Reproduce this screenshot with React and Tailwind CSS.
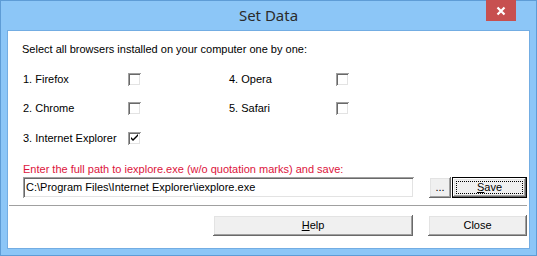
import React from "react";

const raised =
  "shadow-[inset_-1px_-1px_#696969,inset_1px_1px_#ffffff,inset_-2px_-2px_#a0a0a0,inset_2px_2px_#e3e3e3]";
const sunken =
  "shadow-[inset_1px_1px_#a0a0a0,inset_-1px_-1px_#ffffff,inset_2px_2px_#696969,inset_-2px_-2px_#e3e3e3]";

function Check({ checked }) {
  return (
    <div className={`w-[13px] h-[13px] bg-white ${sunken} relative`}>
      {checked && (
        <svg className="absolute left-0 top-0" width="13" height="13" viewBox="0 0 13 13">
          <path d="M3 5 L3 7 L5 9 L10 4 L10 2 L5 7 Z" fill="#000" />
        </svg>
      )}
    </div>
  );
}

export default function App() {
  const font = { fontFamily: '"Liberation Sans", Arial, sans-serif' };
  return (
    <div className="w-[537px] h-[256px] bg-[#8cc6f7] border border-[#5e9cd6] flex flex-col" style={font}>
      <div className="h-[29px] relative flex items-center justify-center">
        <span className="text-[15px] text-[#2b2b2b] mt-[0px]" style={{ fontFamily: '"Noto Sans", sans-serif' }}>
          Set Data
        </span>
        <div className="absolute right-[20px] top-[-1px] w-[30px] h-[21px] bg-[#c75050] flex items-center justify-center">
          <svg width="10" height="10" viewBox="0 0 10 10">
            <path d="M1.5 1.5 L8.5 8.5 M8.5 1.5 L1.5 8.5" stroke="#fff" strokeWidth="2.2" />
          </svg>
        </div>
      </div>
      <div className="ml-[6px] w-[523px] h-[219px] border border-[#73ade3] bg-white flex flex-col text-[11px] text-black">
        <div className="h-[3px]" />
        <div className="h-[30px] flex items-center pl-[14px]">
          Select all browsers installed on your computer one by one:
        </div>
        <div className="grid grid-cols-[105px_13px_88px_107px_13px] pl-[15px] items-center">
          <div className="h-[30px] flex items-center">1. Firefox</div>
          <Check />
          <div />
          <div>4. Opera</div>
          <Check />
          <div className="h-[29px] flex items-center">2. Chrome</div>
          <Check />
          <div />
          <div>5. Safari</div>
          <Check />
          <div className="h-[30px] flex items-center">3. Internet Explorer</div>
          <Check checked />
          <div />
          <div />
          <div />
        </div>
        <div className="mt-[8px] h-[16px] flex items-center pl-[15px] text-[#dc143c]">
          Enter the full path to iexplore.exe (w/o quotation marks) and save:
        </div>
        <div className="flex pl-[15px] h-[21px]">
          <div className={`w-[391px] h-[21px] bg-white ${sunken} flex items-center pl-[3px]`}>
            C:\Program Files\Internet Explorer\iexplore.exe
          </div>
          <div className={`ml-[15px] w-[22px] h-[21px] bg-[#f0f0f0] ${raised} flex items-center justify-center`}>
            ...
          </div>
          <div className="ml-[1px] w-[75px] h-[21px] border border-black bg-[#f0f0f0]">
            <div className={`w-full h-full ${raised} p-[3px]`}>
              <div className="w-full h-full border border-dotted border-black flex items-center justify-center">
                <span><span className="underline">S</span>ave</span>
              </div>
            </div>
          </div>
        </div>
        <div className="mt-[7px] ml-[1px] w-[518px] h-px bg-[#a0a0a0]" />
        <div className="mt-[9px] flex pl-[205px] h-[21px]">
          <div className={`w-[200px] h-[21px] bg-[#f0f0f0] ${raised} flex items-center justify-center`}>
            <span><span className="underline">H</span>elp</span>
          </div>
          <div className={`ml-[15px] w-[99px] h-[21px] bg-[#f0f0f0] ${raised} flex items-center justify-center`}>
            Close
          </div>
        </div>
      </div>
    </div>
  );
}
